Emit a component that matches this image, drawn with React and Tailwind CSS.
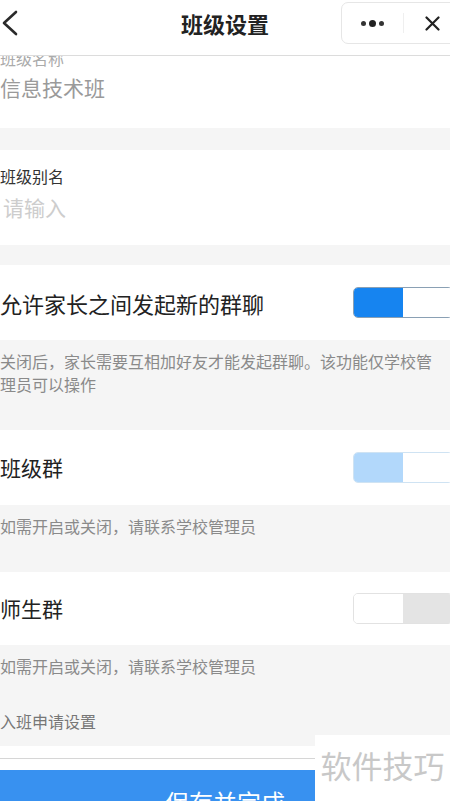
import React from "react";

const font = { fontFamily: '"Noto Sans CJK SC", "Noto Sans", sans-serif' };

function Toggle({ variant }) {
  if (variant === "on") {
    return (
      <div className="flex h-[31px] w-[100px] shrink-0 overflow-hidden rounded-[5px] border border-[#8aa0b4]">
        <div className="w-[49px] bg-[#1684f0]" />
        <div className="flex-1 rounded-l-[4px] bg-white" />
      </div>
    );
  }
  if (variant === "disabledOn") {
    return (
      <div className="flex h-[31px] w-[100px] shrink-0 overflow-hidden rounded-[5px] border border-[#cfe3f3]">
        <div className="w-[49px] bg-[#b2d8fb]" />
        <div className="flex-1 rounded-l-[4px] bg-white" />
      </div>
    );
  }
  return (
    <div className="flex h-[31px] w-[100px] shrink-0 overflow-hidden rounded-[5px] border border-[#e2e2e2]">
      <div className="w-[49px] rounded-r-[4px] bg-white" />
      <div className="flex-1 bg-[#e4e4e4]" />
    </div>
  );
}

export default function App() {
  return (
    <div className="relative h-[801px] w-[450px] overflow-hidden bg-[#f5f5f5]" style={font}>
      {/* Header */}
      <div className="relative z-10 flex h-[56px] items-start justify-center border-b border-[#dcdcdc] bg-white pt-[11px]">
        <svg className="absolute left-[1px] top-[10px]" width="18" height="26" viewBox="0 0 18 26">
          <path d="M15 2 L3 13 L15 24" fill="none" stroke="#2a2a2a" strokeWidth="2.6" strokeLinecap="round" strokeLinejoin="round" />
        </svg>
        <div className="text-[22px] font-bold leading-[24px] text-[#222]">班级设置</div>
        <div className="absolute left-[341px] top-[2px] flex h-[42px] w-[120px] items-center rounded-[7px] border border-[#e6e6e6] bg-white">
          <div className="flex w-[61px] items-center justify-center gap-[3px]">
            <span className="h-[5px] w-[5px] rounded-full bg-[#333]" />
            <span className="h-[7px] w-[7px] rounded-full bg-[#222]" />
            <span className="h-[5px] w-[5px] rounded-full bg-[#333]" />
          </div>
          <div className="h-[20px] w-px bg-[#efefef]" />
          <svg className="ml-[21px]" width="15" height="15" viewBox="0 0 15 15">
            <path d="M1.5 1.5 L13.5 13.5 M13.5 1.5 L1.5 13.5" stroke="#222" strokeWidth="2.2" strokeLinecap="round" />
          </svg>
        </div>
      </div>

      {/* Section 1: 班级名称 */}
      <div className="mt-[-9px] flex h-[81px] flex-col bg-white">
        <div className="text-[16px] leading-[22px] text-[#aaa]">班级名称</div>
        <div className="mt-[3px] text-[21px] leading-[30px] text-[#9a9a9a]">信息技术班</div>
      </div>

      <div className="h-[22px]" />

      {/* Section 2: 班级别名 */}
      <div className="flex h-[95px] flex-col bg-white pt-[15px]">
        <div className="text-[16px] leading-[22px] text-[#333]">班级别名</div>
        <div className="mt-[5px] pl-[3px] text-[21px] leading-[30px] text-[#cdcdcd]">请输入</div>
      </div>

      <div className="h-[20px]" />

      {/* Row: 允许家长 */}
      <div className="flex h-[75px] items-center justify-between bg-white">
        <div className="text-[22px] leading-none text-[#222]">允许家长之间发起新的群聊</div>
        <div className="mr-[-3px]">
          <Toggle variant="on" />
        </div>
      </div>
      <div className="h-[90px] pt-[10px] text-[16px] leading-[23px] text-[#8a8a8a]">
        关闭后，家长需要互相加好友才能发起群聊。该功能仅学校管
        <br />
        理员可以操作
      </div>

      {/* Row: 班级群 */}
      <div className="flex h-[75px] items-center justify-between bg-white">
        <div className="text-[21px] leading-none text-[#222]">班级群</div>
        <div className="mr-[-3px]">
          <Toggle variant="disabledOn" />
        </div>
      </div>
      <div className="h-[67px] pt-[10px] text-[16px] leading-[23px] text-[#8a8a8a]">如需开启或关闭，请联系学校管理员</div>

      {/* Row: 师生群 */}
      <div className="flex h-[73px] items-center justify-between bg-white">
        <div className="text-[21px] leading-none text-[#222]">师生群</div>
        <div className="mr-[-3px]">
          <Toggle variant="off" />
        </div>
      </div>
      <div className="flex h-[101px] flex-col pt-[10px] text-[16px] leading-[23px] text-[#8a8a8a]">
        <div>如需开启或关闭，请联系学校管理员</div>
        <div className="mt-[32px] text-[#777]">入班申请设置</div>
      </div>

      {/* Bottom white strip with line */}
      <div className="h-[24px] bg-white pt-[12px]">
        <div className="h-px w-full bg-[#d6d6d6]" />
      </div>

      {/* Save button */}
      <div className="flex h-[64px] items-center justify-center bg-[#3891f0] text-[24px] leading-none text-white">
        保存并完成
      </div>

      {/* Watermark */}
      <div className="absolute left-[315px] top-[735px] flex h-[66px] w-[135px] items-start justify-center bg-white pt-[14px]">
        <span className="text-[31px] leading-none text-[#c8c8c8]">软件技巧</span>
      </div>
    </div>
  );
}
